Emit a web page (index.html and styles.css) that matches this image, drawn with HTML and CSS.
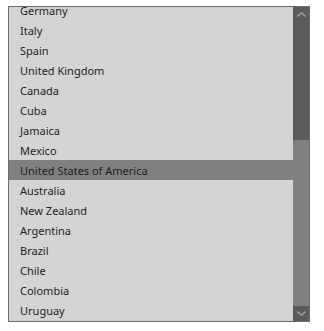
FILE: index.html
```html
<!DOCTYPE html>
<html lang="en">
<head>
  <meta charset="UTF-8">
  <title>Country list</title>
  <link rel="stylesheet" href="styles.css">
</head>
<body>

<div class="listbox" role="listbox" aria-label="Country">
  <div class="viewport">
    <ul class="options">
      <li>Germany</li>
      <li>Italy</li>
      <li>Spain</li>
      <li>United Kingdom</li>
      <li>Canada</li>
      <li>Cuba</li>
      <li>Jamaica</li>
      <li>Mexico</li>
      <li class="selected" aria-selected="true">United States of America</li>
      <li>Australia</li>
      <li>New Zealand</li>
      <li>Argentina</li>
      <li>Brazil</li>
      <li>Chile</li>
      <li>Colombia</li>
      <li>Uruguay</li>
    </ul>
  </div>
  <div class="scrollbar">
    <div class="arrow">
      <svg width="9" height="5" viewBox="0 0 9 5"><path d="M0.5 4.5 L4.5 0.8 L8.5 4.5" fill="none" stroke="#a6a6a6" stroke-width="1.3"/></svg>
    </div>
    <div class="track-top"></div>
    <div class="thumb"></div>
    <div class="arrow">
      <svg width="9" height="5" viewBox="0 0 9 5"><path d="M0.5 0.5 L4.5 4.2 L8.5 0.5" fill="none" stroke="#a6a6a6" stroke-width="1.3"/></svg>
    </div>
  </div>
</div>

</body>
</html>
```

FILE: styles.css
```css
body { margin: 0; background: #fff; }

.listbox {
  display: flex;
  margin: 6px 0 0 8px;
  width: 302px;
  height: 316px;
  box-sizing: border-box;
  border: 1px solid #6b6b6b;
  background: #d4d4d4;
  font-family: "Noto Sans", "Open Sans", sans-serif;
  font-size: 11px;
  color: #1e1e1e;
}

.viewport { flex: 1; overflow: hidden; }

.options { list-style: none; margin: -7px 0 0 0; padding: 0; }
.options li { height: 20px; line-height: 21px; padding-left: 11px; white-space: nowrap; }
.options li.selected { background: #808080; }

.scrollbar { width: 16px; display: flex; flex-direction: column; background: #5b5b5b; }
.arrow { height: 15px; display: flex; align-items: center; justify-content: center; }
.track-top { height: 118px; }
.thumb { flex: 1; background: #808080; }
```
